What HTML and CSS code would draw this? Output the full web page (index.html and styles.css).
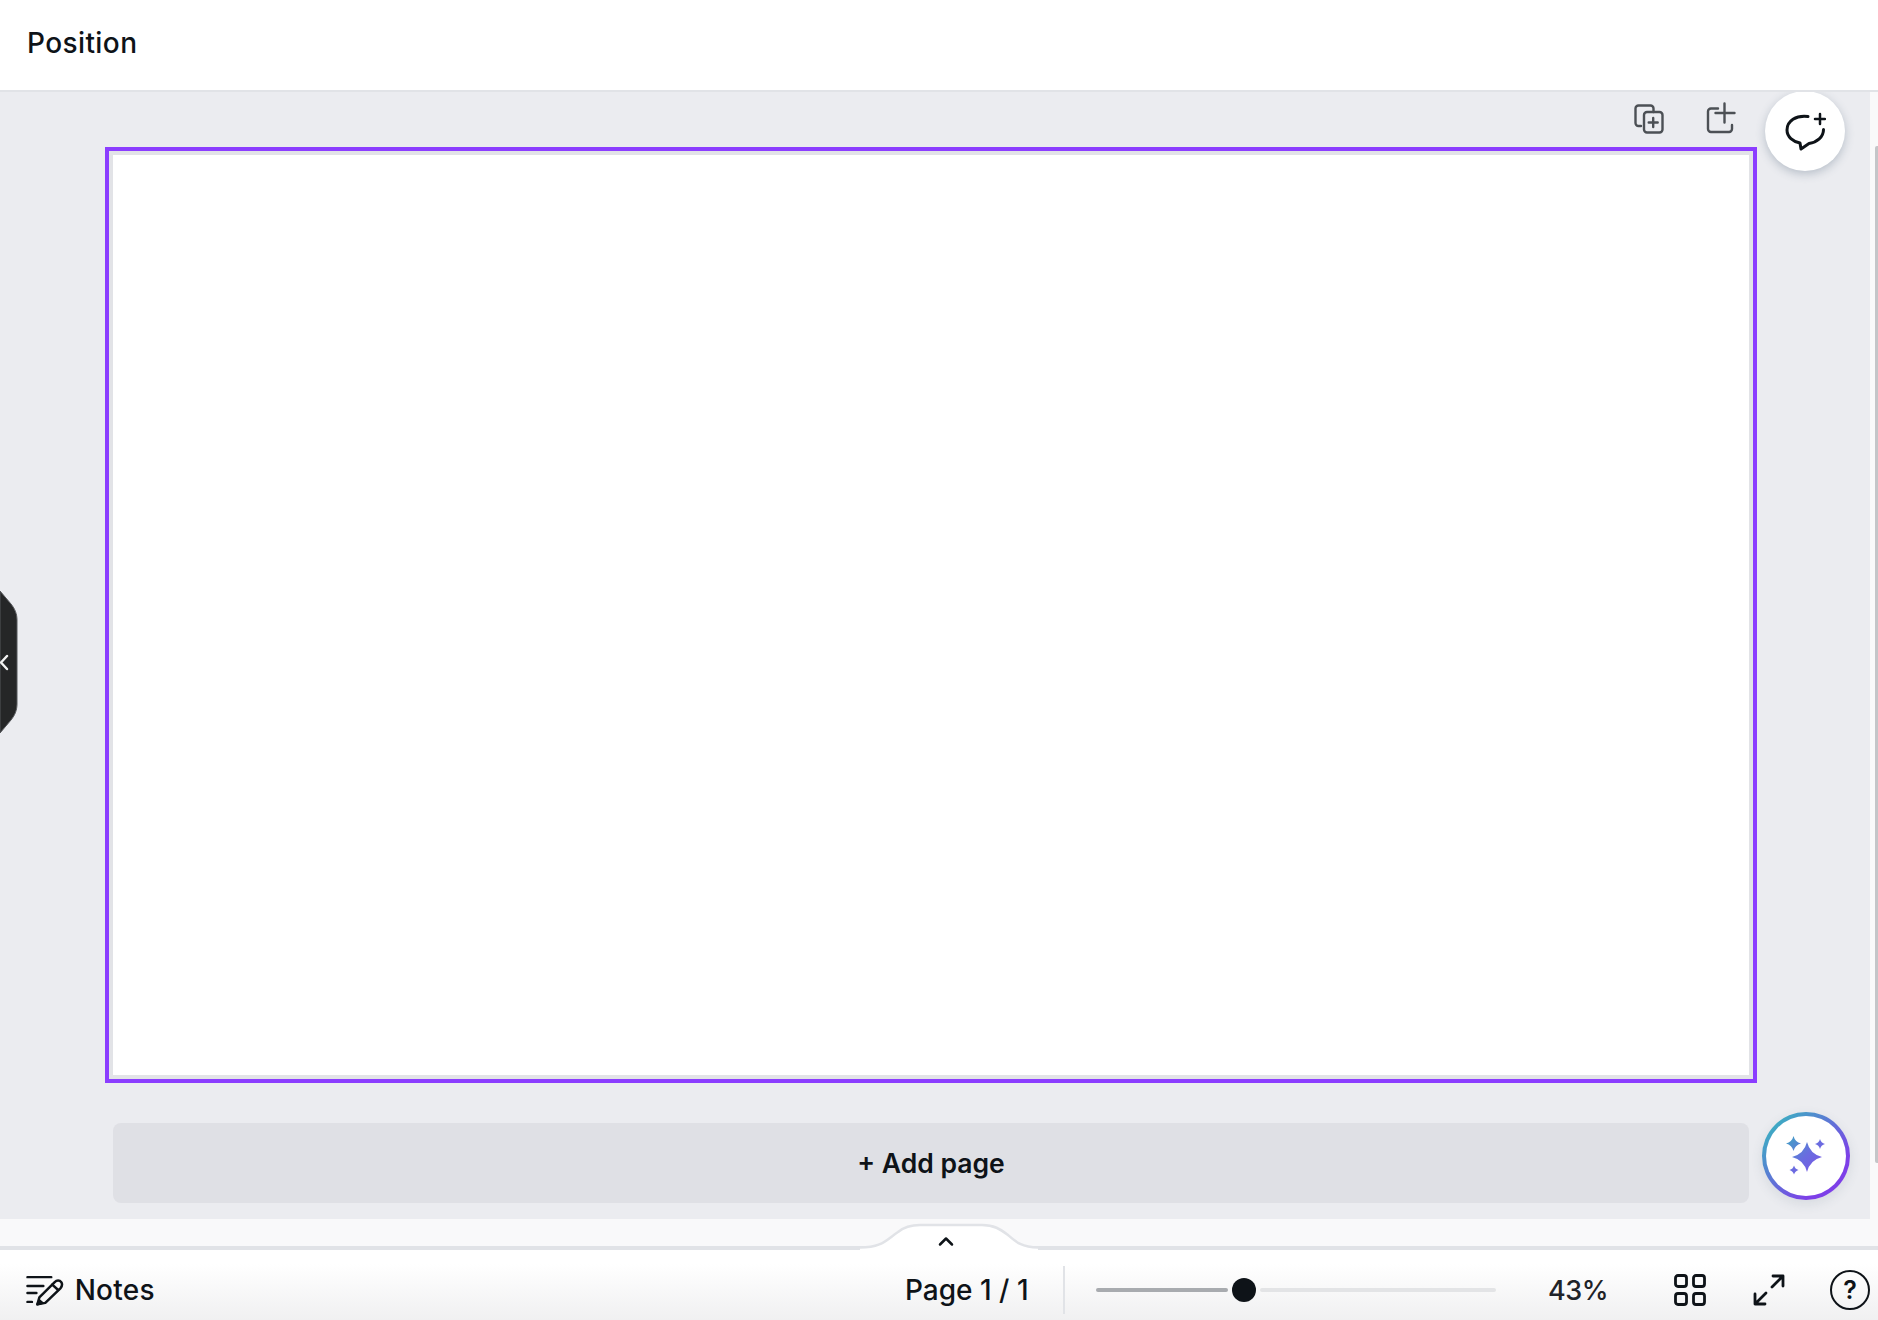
FILE: index.html
```html
<!DOCTYPE html>
<html lang="en">

<head>
    <meta charset="UTF-8">
    <title>Position</title>
    <link rel="stylesheet" href="styles.css">
</head>

<body>
    <div class="app">
        <header class="topbar">Position</header>

        <div class="middle">
            <main class="workspace">
                <div class="page-tools">
                    <svg class="tool-icon tool-duplicate" viewBox="0 0 30 30" fill="none" stroke="#4c5055" stroke-width="2.400" stroke-linecap="round" stroke-linejoin="round">
                        <path d="M7 22H4.500a3 3 0 0 1-3-3V4.500a3 3 0 0 1 3-3h12a3 3 0 0 1 3 3V8"/>
                        <rect x="10" y="8" width="18.500" height="20.500" rx="3"/>
                        <path d="M19.200 14v9M14.700 18.500h9"/>
                    </svg>
                    <svg class="tool-icon" viewBox="0 0 30 32" fill="none" stroke="#4c5055" stroke-width="2.400" stroke-linecap="round" stroke-linejoin="round">
                        <path d="M12 6.500H5a3 3 0 0 0-3 3V27a3 3 0 0 0 3 3h18a3 3 0 0 0 3-3v-4"/>
                        <path d="M18.500 1.500v19M9.500 11h19"/>
                    </svg>
                </div>

                <div class="selection">
                    <div class="page"></div>
                </div>

                <button class="add-page">+ Add page</button>

                <button class="comment-btn">
                    <svg width="42" height="42" viewBox="0 0 42 42" fill="none" stroke="#0e1318" stroke-width="3" stroke-linecap="round" stroke-linejoin="round">
                        <path d="M24 6.500C12 5 3 11 3 20c0 7 6 11.500 13 13l1 6 8-5.500c8-1 14.500-6.500 14.500-14"/>
                        <path d="M36 4v10M31 9h10" stroke-width="2.500"/>
                    </svg>
                </button>

                <button class="magic-btn">
                    <svg width="46" height="46" viewBox="0 0 46 46">
                        <defs>
                            <linearGradient id="sparkle" gradientUnits="userSpaceOnUse" x1="3" y1="3" x2="43" y2="43">
                                <stop offset="0" stop-color="#3fa3c4"/>
                                <stop offset="0.5" stop-color="#6a6ce0"/>
                                <stop offset="1" stop-color="#7d4fe8"/>
                            </linearGradient>
                        </defs>
                        <path fill="url(#sparkle)" d="M24 9Q27 21 39 24 27 27 24 39 21 27 9 24 21 21 24 9z"/>
                        <path fill="url(#sparkle)" d="M10.500 3Q12 9 18 10.500 12 12 10.500 18 9 12 3 10.500 9 9 10.500 3z"/>
                        <path fill="url(#sparkle)" d="M37 6Q38 10 42 11 38 12 37 16 36 12 32 11 36 10 37 6z"/>
                        <path fill="url(#sparkle)" d="M11 32.500Q12 36 15.500 37 12 38 11 41.500 10 38 6.500 37 10 36 11 32.500z"/>
                    </svg>
                </button>
            </main>
            <div class="scroll-thumb"></div>
        </div>

        <div class="strip">
            <svg class="pull-tab" width="180" height="30" viewBox="0 0 180 30">
                <path d="M0 27.500C22 27.500 26 20 38 12 44 7 50 5 60 5H122C134 5 140 9 148 15 156 22 162 27.500 178 27.500V30H0z" fill="#fff"/>
                <path d="M0 27.500C22 27.500 26 20 38 12 44 7 50 5 60 5H122C134 5 140 9 148 15 156 22 162 27.500 178 27.500" fill="none" stroke="#e1e3e7" stroke-width="2.500"/>
                <path d="M80 24.500l6-6 6 6" fill="none" stroke="#0e1318" stroke-width="2.500" stroke-linecap="round" stroke-linejoin="round"/>
            </svg>
        </div>

        <footer class="bottombar">
            <div class="notes">
                <svg width="38" height="32" viewBox="0 0 38 32" fill="none" stroke="#0e1318" stroke-width="2.500" stroke-linecap="round" stroke-linejoin="round">
                    <path d="M1.500 3h24M1.500 12h16M1.500 19h9M1.500 28h4.500"/>
                    <path d="M11.500 30.500l2-7L29 8c2-2 5-2 6.500 0s1 4-.5 6L19.500 29z"/>
                    <path d="M26.500 10.500l6 5.500"/>
                    <path d="M11.500 30.500l2-4 3 2.500z" fill="#0e1318"/>
                </svg>
                <span>Notes</span>
            </div>

            <div class="pager">Page 1 / 1</div>
            <div class="divider"></div>

            <div class="zoom-slider">
                <div class="track-done"></div>
                <div class="thumb"></div>
                <div class="track-rest"></div>
            </div>

            <div class="zoom-value">43%</div>

            <svg class="grid-icon" width="32" height="32" viewBox="0 0 32 32" fill="none" stroke="#0e1318" stroke-width="2.800">
                <rect x="1.500" y="1.500" width="11" height="11" rx="2.500"/>
                <rect x="19.500" y="1.500" width="11" height="11" rx="2.500"/>
                <rect x="1.500" y="19.500" width="11" height="11" rx="2.500"/>
                <rect x="19.500" y="19.500" width="11" height="11" rx="2.500"/>
            </svg>

            <svg class="expand-icon" width="34" height="34" viewBox="0 0 34 34" fill="none" stroke="#0e1318" stroke-width="2.800" stroke-linecap="round" stroke-linejoin="round">
                <path d="M21 3h10v10M31 3L20 14"/>
                <path d="M3 21v10h10M3 31l11-11"/>
            </svg>

            <div class="help">?</div>
        </footer>
    </div>

    <div class="side-tab">
        <svg width="18" height="142" viewBox="0 0 18 142">
            <path d="M0 0l11 13c4 5 6 10 6 16v84c0 6-2 11-6 16L0 142z" fill="#252627" stroke="#55575a" stroke-width="1"/>
            <path d="M7 65l-6 6.500 6 6.500" fill="none" stroke="#f2f2f2" stroke-width="2.400" stroke-linecap="round" stroke-linejoin="round"/>
        </svg>
    </div>
</body>

</html>
```

FILE: styles.css
```css
* {
    box-sizing: border-box;
}

html,
body {
    margin: 0;
    height: 100%;
    overflow: hidden;
}

body {
    font-family: Inter, 'Noto Sans', sans-serif;
    color: #0e1318;
    background-color: #f9f9fa;
}

button {
    font-family: inherit;
    border: none;
    padding: 0;
    cursor: pointer;
}

.app {
    display: flex;
    flex-direction: column;
    height: 1320px;
}

.topbar {
    height: 92px;
    padding: 0 27px 4px;
    display: flex;
    align-items: center;
    position: relative;
    z-index: 1;
    font-size: 28px;
    font-weight: 500;
    letter-spacing: 0.4px;
    background-color: #fff;
    border-bottom: 2px solid #e1e3e7;
}

.middle {
    display: flex;
    height: 1127px;
    position: relative;
}

.workspace {
    position: relative;
    width: 1870px;
    background-color: #ebecf0;
    padding-left: 105px;
}

.page-tools {
    height: 55px;
    width: 1652px;
    padding: 10px 21px 0 0;
    display: flex;
    align-items: flex-start;
    justify-content: flex-end;
    gap: 42px;
}

.tool-icon {
    width: 30px;
    height: 32px;
}

.tool-duplicate {
    height: 30px;
    margin-top: 2px;
}

.selection {
    width: 1652px;
    height: 936px;
    border: 4px solid #8b3dff;
    padding: 4px;
    background-color: #e2e3e7;
}

.page {
    height: 100%;
    background-color: #fff;
}

.add-page {
    display: block;
    width: 1636px;
    height: 80px;
    margin: 40px 0 0 8px;
    border-radius: 8px;
    font-size: 26.500px;
    font-weight: 600;
    color: #0e1318;
    background-color: #dfe0e5;
}

.comment-btn {
    position: absolute;
    left: 1765px;
    top: -1px;
    width: 80px;
    height: 80px;
    border-radius: 50%;
    display: flex;
    align-items: center;
    justify-content: center;
    background-color: #fff;
    box-shadow: 0 3px 10px rgba(64, 87, 109, 0.3);
}

.magic-btn {
    position: absolute;
    left: 1762px;
    top: 1020px;
    width: 88px;
    height: 88px;
    border-radius: 50%;
    display: flex;
    align-items: center;
    justify-content: center;
    border: 4px solid transparent;
    background: linear-gradient(#fff, #fff) padding-box, linear-gradient(135deg, #3fa9c4 15%, #7d3fe8 75%) border-box;
    box-shadow: 0 4px 12px rgba(64, 87, 109, 0.12);
}

.scroll-thumb {
    position: absolute;
    left: 1875px;
    top: 54px;
    width: 3px;
    height: 1017px;
    border-radius: 2px 0 0 2px;
    background-color: #c4c5c8;
}

.strip {
    height: 31px;
    position: relative;
    background-color: #f9f9fa;
    border-bottom: 4px solid #e1e3e7;
}

.pull-tab {
    position: absolute;
    left: 860px;
    top: 1px;
}

.bottombar {
    flex: 1;
    display: flex;
    align-items: center;
    padding: 10px 8px 0 26px;
    background: linear-gradient(#fff 20%, #f0f0f1);
}

.notes {
    width: 129px;
    display: flex;
    align-items: center;
    gap: 11px;
    font-size: 28px;
    font-weight: 550;
    letter-spacing: 0.3px;
}

.pager {
    width: 125px;
    margin-left: 750px;
    font-size: 28px;
    font-weight: 550;
    white-space: nowrap;
}

.divider {
    width: 2px;
    height: 48px;
    margin-left: 33px;
    background-color: #e1e3e7;
}

.zoom-slider {
    display: flex;
    align-items: center;
    margin-left: 31px;
}

.track-done {
    width: 132px;
    height: 4px;
    border-radius: 2px;
    background-color: #a8abaf;
}

.thumb {
    width: 24px;
    height: 24px;
    margin-left: 4px;
    border-radius: 50%;
    background-color: #0e1318;
}

.track-rest {
    width: 236px;
    height: 4px;
    margin-left: 4px;
    border-radius: 2px;
    background-color: #e3e4e6;
}

.zoom-value {
    width: 58px;
    margin-left: 52px;
    font-size: 27px;
    font-weight: 500;
    letter-spacing: -0.5px;
    color: #1f2328;
}

.grid-icon {
    margin-left: 68px;
}

.expand-icon {
    margin-left: 46px;
}

.help {
    width: 40px;
    height: 40px;
    margin-left: 44px;
    border: 2.500px solid #0e1318;
    border-radius: 50%;
    display: flex;
    align-items: center;
    justify-content: center;
    font-size: 25px;
    font-weight: 600;
}

.side-tab {
    position: absolute;
    left: 0;
    top: 591px;
    line-height: 0;
}
```
